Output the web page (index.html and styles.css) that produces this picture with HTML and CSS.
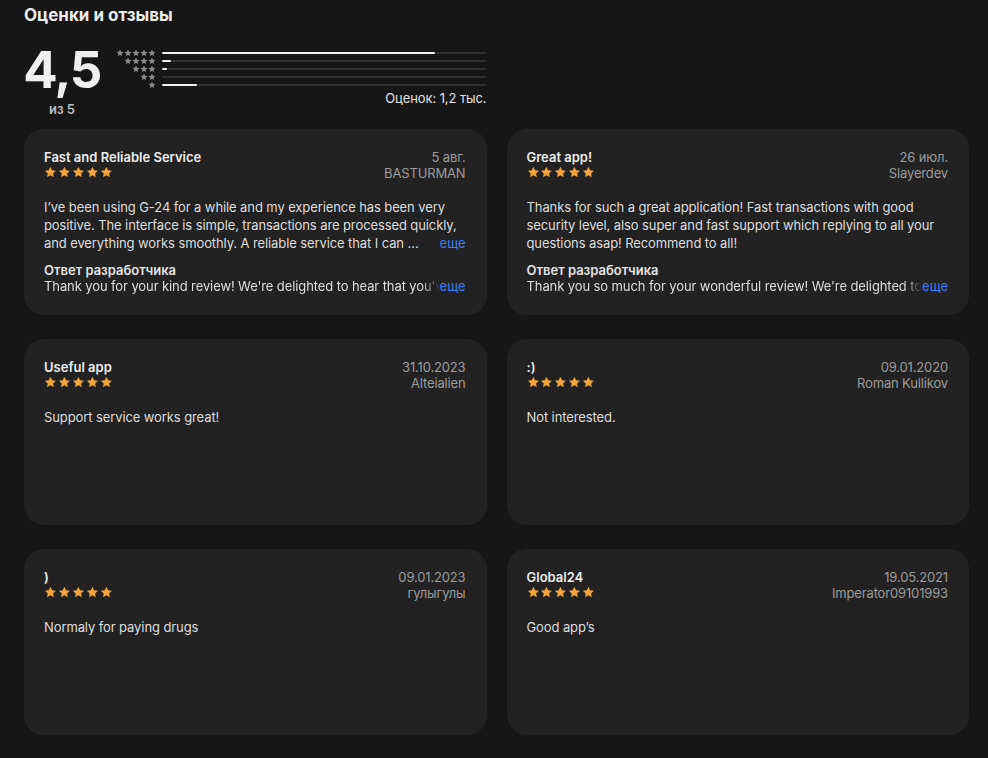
FILE: index.html
```html
<!DOCTYPE html>
<html lang="ru">
<head>
<meta charset="utf-8">
<title>Оценки и отзывы</title>
<link rel="stylesheet" href="styles.css">
</head>
<body>
<svg class="defs" width="0" height="0" aria-hidden="true">
  <defs>
    <symbol id="star" viewBox="0 0 24 24">
      <path d="M12 1.5l3.1 6.6 7.2.88-5.3 4.95 1.38 7.15L12 17.55l-6.38 3.53 1.38-7.15-5.3-4.95 7.2-.88z"/>
    </symbol>
  </defs>
</svg>

<section class="ratings">
  <h2 class="ratings-title">Оценки и отзывы</h2>

  <div class="summary">
    <div class="score">
      <div class="score-value">4,5</div>
      <div class="score-max">из 5</div>
    </div>
    <div class="histogram">
      <div class="hist-rows">
        <div class="hist-row">
          <div class="hist-stars"><svg><use href="#star"/></svg><svg><use href="#star"/></svg><svg><use href="#star"/></svg><svg><use href="#star"/></svg><svg><use href="#star"/></svg></div>
          <div class="hist-track"><div class="hist-fill" style="width:84%"></div></div>
        </div>
        <div class="hist-row">
          <div class="hist-stars"><svg><use href="#star"/></svg><svg><use href="#star"/></svg><svg><use href="#star"/></svg><svg><use href="#star"/></svg></div>
          <div class="hist-track"><div class="hist-fill" style="width:2.8%"></div></div>
        </div>
        <div class="hist-row">
          <div class="hist-stars"><svg><use href="#star"/></svg><svg><use href="#star"/></svg><svg><use href="#star"/></svg></div>
          <div class="hist-track"><div class="hist-fill" style="width:1.6%"></div></div>
        </div>
        <div class="hist-row">
          <div class="hist-stars"><svg><use href="#star"/></svg><svg><use href="#star"/></svg></div>
          <div class="hist-track"><div class="hist-fill" style="width:0%"></div></div>
        </div>
        <div class="hist-row">
          <div class="hist-stars"><svg><use href="#star"/></svg></div>
          <div class="hist-track"><div class="hist-fill" style="width:10.8%"></div></div>
        </div>
      </div>
      <div class="hist-count">Оценок: 1,2 тыс.</div>
    </div>
  </div>

  <div class="reviews">
    <article class="review">
      <header class="review-head">
        <div class="review-main">
          <h3 class="review-title">Fast and Reliable Service</h3>
          <div class="stars"><svg><use href="#star"/></svg><svg><use href="#star"/></svg><svg><use href="#star"/></svg><svg><use href="#star"/></svg><svg><use href="#star"/></svg></div>
        </div>
        <div class="review-meta">
          <div>5 авг.</div>
          <div>BASTURMAN</div>
        </div>
      </header>
      <p class="review-text">I’ve been using G-24 for a while and my experience has been very positive. The interface is simple, transactions are processed quickly, and everything works smoothly. A reliable service that I can …<a class="more" href="#">еще</a></p>
      <div class="reply">
        <div class="reply-title">Ответ разработчика</div>
        <p class="reply-text"><span class="reply-clip">Thank you for your kind review! We're delighted to hear that you've had a positive experience with G-24.</span><a class="more" href="#">еще</a></p>
      </div>
    </article>

    <article class="review">
      <header class="review-head">
        <div class="review-main">
          <h3 class="review-title">Great app!</h3>
          <div class="stars"><svg><use href="#star"/></svg><svg><use href="#star"/></svg><svg><use href="#star"/></svg><svg><use href="#star"/></svg><svg><use href="#star"/></svg></div>
        </div>
        <div class="review-meta">
          <div>26 июл.</div>
          <div>Slayerdev</div>
        </div>
      </header>
      <p class="review-text">Thanks for such a great application! Fast transactions with good security level, also super and fast support which replying to all your questions asap! Recommend to all!</p>
      <div class="reply">
        <div class="reply-title">Ответ разработчика</div>
        <p class="reply-text"><span class="reply-clip">Thank you so much for your wonderful review! We're delighted to hear that you enjoy G-24.</span><a class="more" href="#">еще</a></p>
      </div>
    </article>

    <article class="review">
      <header class="review-head">
        <div class="review-main">
          <h3 class="review-title">Useful app</h3>
          <div class="stars"><svg><use href="#star"/></svg><svg><use href="#star"/></svg><svg><use href="#star"/></svg><svg><use href="#star"/></svg><svg><use href="#star"/></svg></div>
        </div>
        <div class="review-meta">
          <div>31.10.2023</div>
          <div>Alteialien</div>
        </div>
      </header>
      <p class="review-text">Support service works great!</p>
    </article>

    <article class="review">
      <header class="review-head">
        <div class="review-main">
          <h3 class="review-title">:)</h3>
          <div class="stars"><svg><use href="#star"/></svg><svg><use href="#star"/></svg><svg><use href="#star"/></svg><svg><use href="#star"/></svg><svg><use href="#star"/></svg></div>
        </div>
        <div class="review-meta">
          <div>09.01.2020</div>
          <div>Roman Kullikov</div>
        </div>
      </header>
      <p class="review-text">Not interested.</p>
    </article>

    <article class="review">
      <header class="review-head">
        <div class="review-main">
          <h3 class="review-title">)</h3>
          <div class="stars"><svg><use href="#star"/></svg><svg><use href="#star"/></svg><svg><use href="#star"/></svg><svg><use href="#star"/></svg><svg><use href="#star"/></svg></div>
        </div>
        <div class="review-meta">
          <div>09.01.2023</div>
          <div>гулыгулы</div>
        </div>
      </header>
      <p class="review-text">Normaly for paying drugs</p>
    </article>

    <article class="review">
      <header class="review-head">
        <div class="review-main">
          <h3 class="review-title">Global24</h3>
          <div class="stars"><svg><use href="#star"/></svg><svg><use href="#star"/></svg><svg><use href="#star"/></svg><svg><use href="#star"/></svg><svg><use href="#star"/></svg></div>
        </div>
        <div class="review-meta">
          <div>19.05.2021</div>
          <div>Imperator09101993</div>
        </div>
      </header>
      <p class="review-text">Good app’s</p>
    </article>
  </div>
</section>
</body>
</html>
```

FILE: styles.css
```css
* {
  box-sizing: border-box;
}

html,
body {
  margin: 0;
  background: #161616;
}

body {
  font-family: Inter, "Noto Sans", "DejaVu Sans", sans-serif;
  color: #e6e6e6;
  font-size: 13px;
  -webkit-font-smoothing: antialiased;
}

.defs {
  position: absolute;
  width: 0;
  height: 0;
}

.ratings {
  padding: 4px 19px 0 24px;
}

.ratings-title {
  margin: 0;
  font-size: 17px;
  line-height: 22px;
  font-weight: 700;
  color: #ececec;
}

/* summary: big score + histogram, as wide as one review column */
.summary {
  display: flex;
  align-items: flex-start;
  width: calc(50% - 10px);
  margin-top: 19px;
  height: 84px;
}

.score {
  width: 76px;
  display: flex;
  flex-direction: column;
  align-items: center;
}

.score-value {
  font-size: 51px;
  line-height: 50px;
  font-weight: 700;
  letter-spacing: -1.5px;
  color: #efefef;
}

.score-max {
  margin-top: 6px;
  font-size: 13px;
  line-height: 16px;
  font-weight: 600;
  color: #bdbdbd;
}

.histogram {
  margin-left: 16px;
  flex: 1;
  padding-top: 4px;
}

.hist-rows {
  display: flex;
  flex-direction: column;
}

.hist-row {
  display: flex;
  align-items: center;
  height: 8px;
}

.hist-stars {
  width: 40px;
  display: flex;
  justify-content: flex-end;
  fill: #8d8d8d;
}

.hist-stars svg {
  width: 8px;
  height: 8px;
}

.hist-track {
  margin-left: 6px;
  flex: 1;
  height: 2px;
  background: #303030;
  border-radius: 1px;
}

.hist-fill {
  height: 100%;
  background: #f0f0f0;
  border-radius: 1px;
}

.hist-count {
  margin-top: 1px;
  text-align: right;
  font-size: 13px;
  line-height: 16px;
  color: #e2e2e2;
  letter-spacing: -0.1px;
}

/* review cards */
.reviews {
  display: grid;
  grid-template-columns: 1fr 1fr;
  grid-auto-rows: 186px;
  column-gap: 20px;
  row-gap: 24px;
}

.review {
  background: #222222;
  border-radius: 20px;
  padding: 20px 21px 0 20px;
  overflow: hidden;
}

.review-head {
  display: flex;
  justify-content: space-between;
  align-items: flex-start;
}

.review-title {
  margin: 0;
  font-size: 13px;
  line-height: 16px;
  font-weight: 600;
  color: #ececec;
}

.stars {
  display: flex;
  gap: 1.2px;
  fill: #f3a43b;
  padding-top: 1px;
}

.stars svg {
  width: 12.8px;
  height: 12.8px;
}

.review-meta {
  text-align: right;
  font-size: 13px;
  line-height: 16px;
  color: #9c9c9c;
  letter-spacing: -0.15px;
}

.review-text {
  position: relative;
  margin: 17px 0 0;
  font-size: 13px;
  line-height: 18px;
  color: #dedede;
  letter-spacing: -0.1px;
}

.more {
  color: #3b7ff1;
  text-decoration: none;
  letter-spacing: 0;
}

.review-text .more {
  position: absolute;
  right: 0;
  bottom: 0;
}

.reply {
  margin-top: 10px;
}

.reply-title {
  font-size: 13px;
  line-height: 16px;
  font-weight: 600;
  color: #e4e4e4;
}

/* one clipped line that fades out right before the "more" link */
.reply-text {
  display: flex;
  margin: 0;
  font-size: 13px;
  line-height: 16px;
  color: #dedede;
  letter-spacing: -0.1px;
}

.reply-clip {
  flex: 1;
  min-width: 0;
  white-space: nowrap;
  overflow: hidden;
  -webkit-mask-image: linear-gradient(to left, transparent 0, #000 18px);
  mask-image: linear-gradient(to left, transparent 0, #000 18px);
}

.reply-text .more {
  flex: none;
}
```
